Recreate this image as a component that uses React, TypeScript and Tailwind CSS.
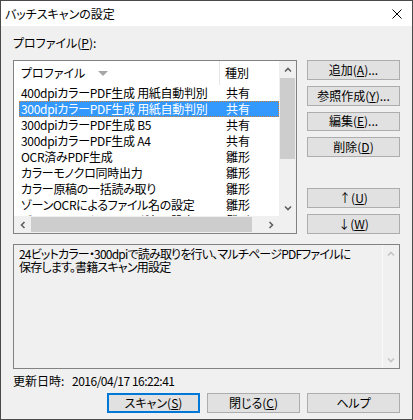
import React from "react";

function Chevron({ dir, color = "#606060" }: { dir: "up" | "down" | "left" | "right"; color?: string }) {
  if (dir === "up" || dir === "down") {
    return (
      <svg width="8" height="6" viewBox="0 0 8 6">
        <path d={dir === "up" ? "M1 4.5 L4 1.5 L7 4.5" : "M1 1.5 L4 4.5 L7 1.5"} fill="none" stroke={color} strokeWidth="1.6" />
      </svg>
    );
  }
  return (
    <svg width="6" height="8" viewBox="0 0 6 8">
      <path d={dir === "left" ? "M4.5 1 L1.5 4 L4.5 7" : "M1.5 1 L4.5 4 L1.5 7"} fill="none" stroke={color} strokeWidth="1.6" />
    </svg>
  );
}

function Btn({ children, def }: { children: React.ReactNode; def?: boolean }) {
  return (
    <div
      className={
        def
          ? "flex h-[20px] w-[93px] items-center justify-center border-2 border-[#0078d7] bg-[#e1e1e1] text-[12px] leading-none text-black"
          : "flex h-[20px] w-[93px] items-center justify-center border border-[#adadad] bg-[#e1e1e1] text-[12px] leading-none text-black"
      }
    >
      {children}
    </div>
  );
}

const rows: [string, string][] = [
  ["400dpiカラーPDF生成 用紙自動判別", "共有"],
  ["300dpiカラーPDF生成 用紙自動判別", "共有"],
  ["300dpiカラーPDF生成 B5", "共有"],
  ["300dpiカラーPDF生成 A4", "共有"],
  ["OCR済みPDF生成", "雛形"],
  ["カラーモノクロ同時出力", "雛形"],
  ["カラー原稿の一括読み取り", "雛形"],
  ["ゾーンOCRによるファイル名の設定", "雛形"],
  ["ゾーンOCRによるフォルダ名の設定", "雛形"],
];

export default function App() {
  return (
    <div className="flex h-[420px] w-[413px] flex-col border border-[#4a4a4a] bg-[#f0f0f0] font-['Noto_Sans_CJK_JP',sans-serif] text-[12px] text-black [font-feature-settings:'palt']">
      {/* Title bar */}
      <div className="flex h-[25px] shrink-0 items-center justify-between bg-white pl-[4px] pr-[10px]">
        <span className="text-[12px] leading-none">バッチスキャンの設定</span>
        <svg width="10" height="10" viewBox="0 0 10 10">
          <path d="M0.5 0.5 L9.5 9.5 M9.5 0.5 L0.5 9.5" stroke="#000" strokeWidth="1" />
        </svg>
      </div>

      {/* Body */}
      <div className="flex flex-1 flex-col px-[12px] pt-[10px] pb-[6px]">
        <div className="flex h-[14px] items-center leading-none">
          プロファイル(<span className="underline">P</span>):
        </div>

        <div className="mt-[10px] flex h-[174px] gap-[10px]">
          {/* List box */}
          <div className="flex w-[284px] flex-col border border-[#828282] bg-white">
            <div className="flex h-[155px]">
              <div className="relative flex-1 overflow-hidden">
                {/* header */}
                <div className="flex h-[24px] items-center">
                  <div className="flex h-full w-[206px] items-center border-r border-[#e5e5e5] pl-[7px]">
                    <span className="leading-none">プロファイル</span>
                    <svg className="ml-[13px]" width="10" height="5" viewBox="0 0 10 5">
                      <polygon points="0,0 10,0 5,5" fill="#a6a6a6" />
                    </svg>
                  </div>
                  <div className="pl-[5px] leading-none">種別</div>
                </div>
                {/* rows */}
                {rows.map(([name, kind], i) => (
                  <div
                    key={i}
                    className={
                      i === 1
                        ? "ml-[5px] flex h-[16px] items-center border border-dotted border-[#c8803a] bg-[#3399ff] leading-none text-white"
                        : "ml-[5px] flex h-[16px] items-center border border-transparent leading-none text-black"
                    }
                  >
                    <span className="w-[206px] shrink-0 whitespace-nowrap pl-[1px] tracking-[-0.3px]">{name}</span>
                    <span className="whitespace-nowrap">{kind}</span>
                  </div>
                ))}
              </div>
              {/* vertical scrollbar */}
              <div className="flex w-[17px] flex-col bg-[#f0f0f0]">
                <div className="flex h-[17px] items-center justify-center">
                  <Chevron dir="up" />
                </div>
                <div className="mx-[1px] h-[81px] bg-[#cdcdcd]" />
                <div className="flex-1" />
                <div className="flex h-[17px] items-center justify-center">
                  <Chevron dir="down" />
                </div>
              </div>
            </div>
            {/* horizontal scrollbar */}
            <div className="flex h-[17px] bg-[#f0f0f0]">
              <div className="flex w-[17px] items-center justify-center">
                <Chevron dir="left" />
              </div>
              <div className="my-[1px] w-[221px] bg-[#cdcdcd]" />
              <div className="flex-1" />
              <div className="flex w-[17px] items-center justify-center">
                <Chevron dir="right" />
              </div>
              <div className="w-[17px] bg-[#f0f0f0]" />
            </div>
          </div>

          {/* Right buttons */}
          <div className="flex flex-col gap-[6px]">
            <Btn>
              追加(<span className="underline">A</span>)...
            </Btn>
            <Btn>
              参照作成(<span className="underline">Y</span>)...
            </Btn>
            <Btn>
              編集(<span className="underline">E</span>)...
            </Btn>
            <Btn>
              削除(<span className="underline">D</span>)
            </Btn>
            <div className="mt-[25px]">
              <Btn>
                ↑(<span className="underline">U</span>)
              </Btn>
            </div>
            <Btn>
              ↓(<span className="underline">W</span>)
            </Btn>
          </div>
        </div>

        {/* Description */}
        <div className="mt-[10px] flex h-[125px] border border-[#828282] bg-[#f0f0f0]">
          <div className="flex-1 pl-[5px] pt-[2px] text-[12px] leading-[13px] tracking-[-0.8px]">
            <div className="whitespace-nowrap">24ビットカラー・300dpiで読み取りを行い、マルチページPDFファイルに</div>
            <div className="whitespace-nowrap">保存します。書籍スキャン用設定</div>
          </div>
          <div className="flex w-[17px] flex-col justify-between border-l border-[#fafafa]">
            <div className="flex h-[17px] items-center justify-center">
              <Chevron dir="up" color="#c4c4c4" />
            </div>
            <div className="flex h-[17px] items-center justify-center">
              <Chevron dir="down" color="#c4c4c4" />
            </div>
          </div>
        </div>

        {/* Updated */}
        <div className="mt-[5px] flex h-[14px] items-center leading-none">
          <span className="w-[59px]">更新日時:</span>
          <span className="tracking-[-0.5px]">2016/04/17 16:22:41</span>
        </div>

        {/* Bottom buttons */}
        <div className="mt-[5px] flex justify-end gap-[7px]">
          <Btn def>
            スキャン(<span className="underline">S</span>)
          </Btn>
          <Btn>
            閉じる(<span className="underline">C</span>)
          </Btn>
          <Btn>ヘルプ</Btn>
        </div>
      </div>
    </div>
  );
}
